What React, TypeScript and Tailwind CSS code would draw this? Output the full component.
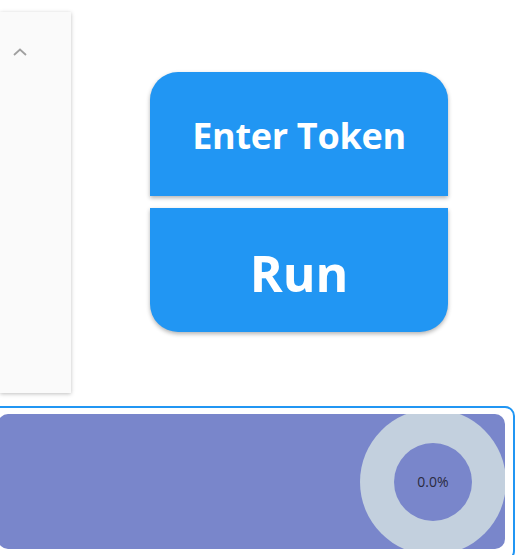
import React from 'react';

export default function App() {
  return (
    <div className="w-[526px] h-[555px] overflow-hidden bg-white" style={{ fontFamily: '"Open Sans", "Noto Sans", sans-serif' }}>
      <div className="flex items-start h-[406px]">
        <div className="mt-[12px] h-[381px] w-[71px] bg-[#fafafa] shadow-[0_1px_4px_rgba(0,0,0,0.25)] relative">
          <svg className="absolute left-[12px] top-[35px]" width="16" height="10" viewBox="0 0 16 10">
            <path d="M2 8 L8 2.5 L14 8" fill="none" stroke="#a0a0a0" strokeWidth="1.8" />
          </svg>
        </div>
        <div className="ml-[79px] mt-[72px] w-[298px] flex flex-col gap-[12px]">
          <button className="h-[124px] rounded-t-[28px] bg-[#2196f3] text-white text-[36px] font-bold tracking-[-0.3px] shadow-[0_2px_4px_rgba(0,0,0,0.3)] flex items-center justify-center pt-[4px]">
            Enter Token
          </button>
          <button className="h-[124px] rounded-b-[28px] bg-[#2196f3] text-white text-[50px] font-bold shadow-[0_2px_4px_rgba(0,0,0,0.3)] flex items-center justify-center pt-[6px]">
            Run
          </button>
        </div>
      </div>
      <div className="-ml-[10px] w-[525px] border-2 border-[#2196f3] rounded-[10px] pt-[6px] pr-[8px] pb-[10px] pl-[6px]">
        <div className="h-[135px] bg-[#7986cb] rounded-[10px] overflow-hidden flex items-center justify-end">
          <div className="w-[146px] h-[146px] shrink-0 -mr-[1px] rounded-full bg-[#c3d0de] flex items-center justify-center">
            <div className="w-[78px] h-[78px] rounded-full bg-[#7986cb] flex items-center justify-center text-[14px] text-[#2a2a40]">
              0.0%
            </div>
          </div>
        </div>
      </div>
    </div>
  );
}
